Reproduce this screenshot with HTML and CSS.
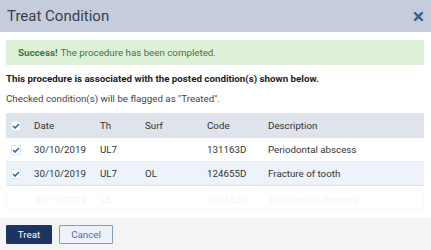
FILE: index.html
```html
<!DOCTYPE html>
<html>
<head>
<meta charset="utf-8">
<link rel="stylesheet" href="styles.css">
</head>
<body>
<div class="modal">
  <div class="modal-header">
    <span class="title">Treat Condition</span>
    <span class="close"><svg width="9" height="9" viewBox="0 0 9 9"><path d="M1 1L8 8M8 1L1 8" stroke="#2e6491" stroke-width="2.4" stroke-linecap="square"/></svg></span>
  </div>
  <div class="modal-body">
    <div class="alert"><b>Success!</b> The procedure has been completed.</div>
    <p class="lead">This procedure is associated with the posted condition(s) shown below.</p>
    <p class="note">Checked condition(s) will be flagged as "Treated".</p>
    <div class="table">
      <div class="row head">
        <span class="c-chk"><span class="cb"><svg width="8" height="6" viewBox="0 0 8 6"><path d="M1 3L3 5L7 1" stroke="#2a6bb0" stroke-width="1.6" fill="none"/></svg></span></span>
        <span class="c-date">Date</span><span class="c-th">Th</span><span class="c-surf">Surf</span><span class="c-code">Code</span><span class="c-desc">Description</span>
      </div>
      <div class="row">
        <span class="c-chk"><span class="cb"><svg width="8" height="6" viewBox="0 0 8 6"><path d="M1 3L3 5L7 1" stroke="#2a6bb0" stroke-width="1.6" fill="none"/></svg></span></span>
        <span class="c-date">30/10/2019</span><span class="c-th">UL7</span><span class="c-surf"></span><span class="c-code">131163D</span><span class="c-desc">Periodontal abscess</span>
      </div>
      <div class="row alt">
        <span class="c-chk"><span class="cb"><svg width="8" height="6" viewBox="0 0 8 6"><path d="M1 3L3 5L7 1" stroke="#2a6bb0" stroke-width="1.6" fill="none"/></svg></span></span>
        <span class="c-date">30/10/2019</span><span class="c-th">UL7</span><span class="c-surf">OL</span><span class="c-code">124655D</span><span class="c-desc">Fracture of tooth</span>
      </div>
      <div class="row ghost">
        <span class="c-chk"><span class="cb"></span></span>
        <span class="c-date">30/10/2019</span><span class="c-th">UL</span><span class="c-surf"></span><span class="c-code">131163D</span><span class="c-desc">Periodontal abscess</span>
      </div>
    </div>
  </div>
  <div class="modal-footer">
    <button class="btn primary">Treat</button>
    <button class="btn secondary">Cancel</button>
  </div>
</div>
</body>
</html>
```
FILE: styles.css
```css
* { box-sizing: border-box; }
html, body { margin: 0; padding: 0; background: #fff; }
body { font-family: Roboto, "Liberation Sans", sans-serif; width: 431px; height: 250px; overflow: hidden; }
.modal { width: 431px; height: 250px; display: flex; flex-direction: column; }
.modal-header { height: 32px; background: #c5cddd; display: flex; align-items: center; justify-content: space-between; padding: 0 6px 0 7px; }
.title { font-size: 15px; color: #3a3f48; }
.close { width: 14px; height: 14px; display: flex; align-items: center; justify-content: center; background: #c2cad9; }
.modal-body { flex: 1; padding: 8px 7px 0 6px; }
.alert { height: 25px; background: #dff0d8; color: #3c763d; font-size: 9.75px; display: flex; align-items: center; padding-left: 12px; }
.alert b { font-weight: 700; margin-right: 3px; }
.lead { margin: 8px 0 0; font-size: 9.75px; font-weight: 700; color: #222; line-height: 12px; }
.note { margin: 8px 0 0; font-size: 9.75px; color: #444; line-height: 12px; }
.table { margin-top: 8px; font-size: 9.75px; color: #333; }
.row { display: flex; align-items: center; height: 24px; border-bottom: 1px solid #e6ebf2; }
.row.head { height: 25px; background: #dfe3ec; border-bottom: none; color: #333; }
.row.alt { background: #eef3fb; border-bottom: 1px solid #dbe4f0; }
.row.ghost { opacity: 0.05; margin-top: 2px; height: 22px; border: 1px solid #999; }
.c-chk { width: 28px; padding-left: 5px; display: flex; }
.cb { width: 10px; height: 10px; background: #fff; border: 1px solid #e3e7ee; display: flex; align-items: center; justify-content: center; }
.c-date { width: 66px; }
.c-th { width: 45px; }
.c-surf { width: 62px; }
.c-code { width: 61px; }
.c-desc { flex: 1; }
.modal-footer { height: 32px; background: #f4f4f4; display: flex; align-items: flex-start; padding: 7px 0 0 6px; gap: 7px; }
.btn { font-family: Roboto, "Liberation Sans", sans-serif; font-size: 9.75px; height: 19px; padding: 0; border-radius: 1px; }
.btn.primary { width: 46px; background: #1b3462; color: #fff; border: 1px solid #1b3462; }
.btn.secondary { width: 54px; background: #edf2fa; color: #4f6f94; border: 1px solid #7d9fc0; }
```
